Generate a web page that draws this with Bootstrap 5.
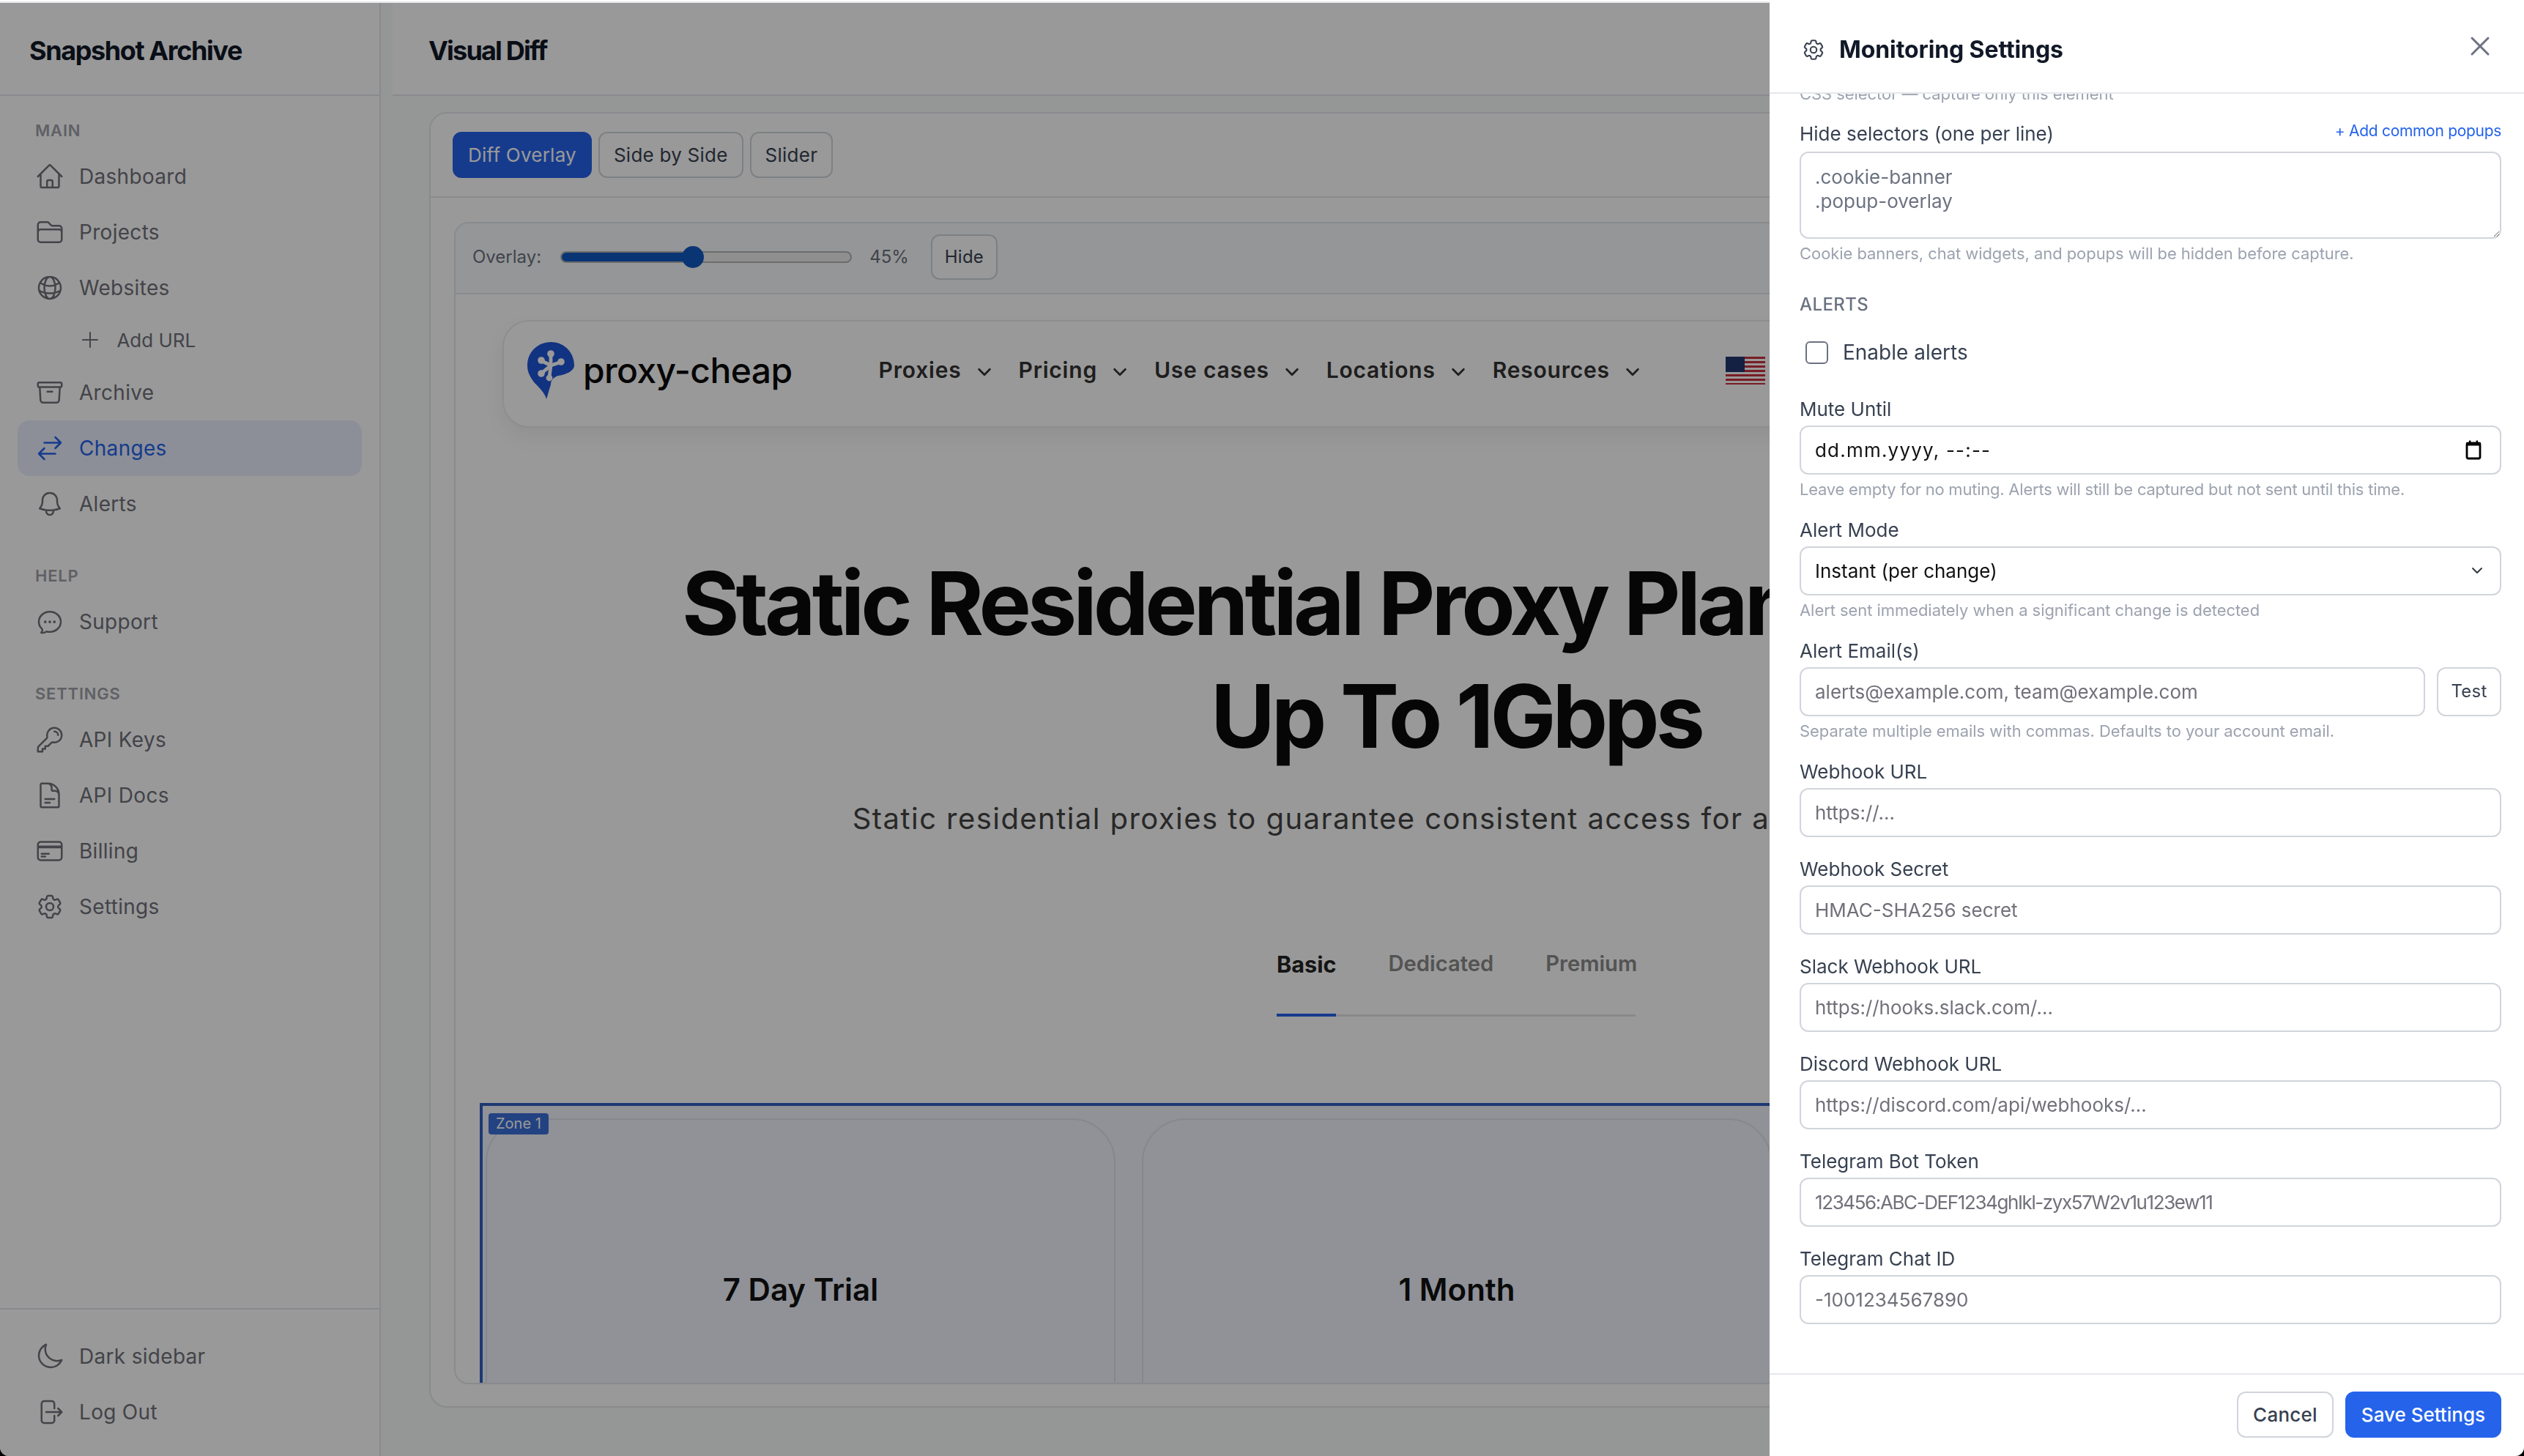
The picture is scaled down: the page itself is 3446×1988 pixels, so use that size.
<!DOCTYPE html>
<html lang="en">
<head>
  <meta charset="UTF-8">
  <title>Visual Diff - Snapshot Archive</title>
  <link rel="stylesheet" href="https://cdn.jsdelivr.net/npm/bootstrap@5.3.0/dist/css/bootstrap.min.css">
  <style>
    body { zoom: 2; margin: 0; height: 994px; overflow: hidden; background: #000; font-family: Inter, "Liberation Sans", sans-serif; }
    .top-edge { height: 2px; background: #fff; border-bottom: 1px solid #e5e7eb; }
    .app-frame { height: 992px; background: #f9fafb; border-radius: 0 0 6px 6px; overflow: hidden; }

    /* sidebar */
    .side-bar { width: 260px; background: #fff; border-right: 1px solid #e5e7eb; }
    .side-brand { height: 63.5px; padding: 2px 0 0 20px; border-bottom: 1px solid #e5e7eb; font-size: 18px; font-weight: 700; letter-spacing: -.7px; color: #111827; }
    .side-scroll { padding: 15.25px 12px 0; }
    .side-label { font-size: 11px; font-weight: 600; line-height: 16.5px; letter-spacing: .4px; color: #a1a1aa; padding-left: 12px; margin-bottom: 4px; }
    .side-group { margin-bottom: 22px; }
    .side-link { height: 38px; padding: 0 0 0 12px; gap: 10px; font-size: 14px; letter-spacing: .15px; color: #71717a; border-radius: 8px; }
    .side-link svg { width: 20px; height: 20px; flex: none; }
    .side-link.is-sub { height: 33.6px; padding-left: 41.7px; font-size: 13px; letter-spacing: 0; }
    .side-link.is-sub svg { width: 16px; height: 16px; }
    .side-link.active { background: rgba(37, 99, 235, .1); color: #2563eb; }
    .side-foot { padding: 13px 12px 11px; border-top: 1px solid #e5e7eb; }
    .ico { fill: none; stroke: currentColor; stroke-width: 1.5; stroke-linecap: round; stroke-linejoin: round; }

    /* main */
    .main-col { margin-left: 8px; min-width: 0; }
    .main-head { height: 63.5px; padding: 2px 0 0 24.5px; background: #fff; border-bottom: 1px solid #e5e7eb; font-size: 18px; font-weight: 700; letter-spacing: -.9px; color: #111827; }
    .main-body { padding: 11px 25px 0; }
    .diff-card { height: 884.5px; border-color: #e5e7eb; border-radius: 12px; overflow: hidden; }
    .diff-tabs { padding: 12.5px 15px; background: #fff; border-bottom: 1px solid #e5e7eb; gap: 4.5px; }
    .diff-body { padding: 16.5px 16px 16px; }
    .frame-box { height: 793.5px; border: 1px solid #e5e7eb; border-radius: 10px; overflow: hidden; background: #fff; }
    .frame-bar { height: 48.5px; padding: 0 0 2px 11.5px; background: #f8fafc; border-bottom: 1px solid #e5e7eb; font-size: 12px; color: #6b7280; }
    .btn-tab { height: 31.5px; padding: 0 9.5px; font-size: 13px; letter-spacing: .12px; color: #374151; border: 1px solid #d1d5db; border-radius: 6px; background: #fff; }
    .btn-tab.is-on { background: #2563eb; border-color: #2563eb; color: #fff; }
    .btn-hide { height: 31px; padding: 0 8.5px; font-size: 12px; margin-left: 15px; }
    .overlay-range { width: 199px; height: 16px; margin: 0 12px 0 13px; }
    .overlay-range::-webkit-slider-runnable-track { height: 8px; border-radius: 4px; background: linear-gradient(to right, #1259c3 var(--pct), #efefef var(--pct)); border: 1px solid #b5b5b5; }
    .overlay-range::-webkit-slider-thumb { width: 15px; height: 15px; margin-top: -4.5px; border-radius: 50%; background: #1259c3; border: 0; box-shadow: none; }

    /* captured page inside the diff */
    .shot-view { height: 744px; position: relative; overflow: hidden; background: #fff; }
    .shot-nav { width: 1302px; height: 73.5px; margin: 17.5px 0 0 32px; padding: 0 0 5px 16px; border: 1px solid #ececec; border-radius: 18px; box-shadow: 0 6px 14px rgba(0, 0, 0, .06); }
    .shot-brand { font-size: 24px; font-weight: 500; letter-spacing: -.3px; color: #0b0b0b; margin: 0 59px 0 6px; }
    .shot-menu { font-size: 15px; font-weight: 600; letter-spacing: .4px; color: #333; margin-right: 18px; }
    .shot-menu svg { width: 11px; height: 11px; margin-left: 10px; }
    .shot-flag { width: 27px; height: 19px; margin-left: 40px; }
    .shot-title { margin: 81.3px 0 0 32px; width: 1302px; font-size: 60px; line-height: 77px; font-weight: 700; letter-spacing: -2.5px; color: #0b0b0b; text-align: center; }
    .shot-sub { margin: 16.5px 0 0 32px; width: 1302px; font-size: 20px; line-height: 30px; letter-spacing: .72px; color: #444; text-align: center; white-space: nowrap; }
    .shot-switch { width: 245px; margin: 56.2px 0 0 560.5px; border-bottom: 1.5px solid #e5e5e5; height: 64px; gap: 35.5px; font-size: 14.6px; font-weight: 600; color: #8a8a8a; }
    .shot-switch span { padding-top: 17px; height: 64px; }
    .shot-switch .is-picked { color: #222; font-size: 15.3px; font-weight: 700; width: 43px; border-bottom: 2px solid #2563eb; }
    .shot-zone { position: absolute; left: 16.5px; top: 552px; width: 1332px; height: 200px; border: solid #2f5fc0; border-width: 2px 0 0 2px; background: rgba(37, 99, 235, .07); padding: 8.5px 0 0 2px; gap: 18px; }
    .shot-plan { width: 430px; height: 300px; flex: none; padding-top: 100px; border: 1px solid #e0e2e8; border-radius: 30px; text-align: center; font-size: 21px; font-weight: 600; color: #111; }
    .zone-tag { position: absolute; left: 4px; top: 5px; padding: 0 5px; height: 14.5px; line-height: 14.5px; border-radius: 2px; background: #3b6fd9; color: #fff; font-size: 10px; }

    /* dim behind the settings panel */
    .dim-layer { top: 2px; opacity: 1 !important; background: rgba(0, 0, 0, .4); }

    /* settings panel */
    .settings-panel { --bs-offcanvas-width: 515px; top: 2px; border: 0 !important; border-radius: 0 0 6px 0; color: #374151; }
    .settings-head { height: 64px; padding: 5px 23px 0 21.5px; border-bottom: 1px solid #e5e7eb; flex: none; }
    .settings-head svg.cog { width: 17px; height: 17px; margin-right: 9px; color: #374151; }
    .settings-title { font-size: 16px; font-weight: 700; letter-spacing: -.05px; color: #111827; margin: 0; }
    .close-x { color: #6b7280; margin-top: -5px; line-height: 0; }
    .close-x svg { width: 14px; height: 14px; }
    .settings-body { padding: 0 15.5px 0 20.5px; overflow: hidden; }
    .clip-hint { margin-top: -7px !important; }
    .first-field { margin-top: 11.3px; }
    .field { margin-bottom: 12px; }
    .field-label { display: block; font-size: 13px; line-height: 19.5px; margin-bottom: 1.5px; color: #374151; }
    .first-field .field-label { margin-bottom: 2.5px; }
    .field-link { font-size: 10.5px; letter-spacing: -.15px; color: #2563eb; text-decoration: none; }
    .field-input, .field-input.form-select { height: 33.5px; padding: 0 9.5px; font-size: 13px; color: #374151; border-color: #d1d5db; border-radius: 6px; }
    .field-input::placeholder { color: #71717a; }
    .field-area { height: 59.5px; padding: 8px 9.5px; font-size: 13px; line-height: 16.5px; color: #6b7280; border-color: #d1d5db; border-radius: 6px; }
    .field-date { color: #111; letter-spacing: .6px; background-repeat: no-repeat; background-position: right 12px center; background-size: 12px 14px;
      background-image: url("data:image/svg+xml,%3Csvg xmlns='http://www.w3.org/2000/svg' viewBox='0 0 12 14'%3E%3Crect x='1.5' y='2.5' width='9' height='10.5' rx='1' fill='none' stroke='%23000' stroke-width='1.4'/%3E%3Cpath d='M1 2h10v2.2H1zM3 .7h1.2V2H3zM7.8.7H9V2H7.8z'/%3E%3C/svg%3E"); }
    .field-select { color: #111 !important; background-size: 9px 8px; background-position: right 11px center; }
    .field-token::placeholder { letter-spacing: -.7px; }
    .field-help { margin: 3px 0 -1px; font-size: 11px; line-height: 14px; letter-spacing: -.03px; color: #9ca3af; }
    .help-tight { letter-spacing: -.115px; }
    .field-head { margin: 20.1px 0 14px; font-size: 12px; line-height: 18px; font-weight: 500; letter-spacing: .2px; color: #6b7280; }
    .check-row { height: 19.5px; margin-bottom: 19px; gap: 10px; padding-left: 4px; font-size: 14px; }
    .check-row .form-check-input { width: 15.5px; height: 15.5px; margin: 0; border-color: #6b7280; border-radius: 3px; }
    .btn-test { height: 33.5px; width: 44px; padding: 0; font-size: 12px; }
    .settings-foot { height: 56.5px; padding: 11.5px 15.5px 0 0; border-top: 1px solid #e5e7eb; gap: 8px; flex: none; }
    .btn-foot { height: 31.5px; padding: 0 10px; font-size: 13px; font-weight: 500; border-radius: 6px; }
    .btn-foot.is-save { background: #2563eb; color: #fff; border: 1px solid #2563eb; }
  </style>
</head>
<body>
  <svg class="d-none" xmlns="http://www.w3.org/2000/svg">
    <symbol id="i-home" viewBox="0 0 24 24"><path d="M2.25 12l8.954-8.955c.44-.439 1.152-.439 1.591 0L21.75 12M4.5 9.75v10.125c0 .621.504 1.125 1.125 1.125H9.75v-4.875c0-.621.504-1.125 1.125-1.125h2.25c.621 0 1.125.504 1.125 1.125V21h4.125c.621 0 1.125-.504 1.125-1.125V9.75M8.25 21h8.25"/></symbol>
    <symbol id="i-folder" viewBox="0 0 24 24"><path d="M2.25 12.75V12A2.25 2.25 0 0 1 4.5 9.75h15A2.25 2.25 0 0 1 21.75 12v.75m-8.69-6.44-2.12-2.12a1.5 1.5 0 0 0-1.061-.44H4.5A2.25 2.25 0 0 0 2.25 6v12a2.25 2.25 0 0 0 2.25 2.25h15A2.25 2.25 0 0 0 21.75 18V9a2.25 2.25 0 0 0-2.25-2.25h-5.379a1.5 1.5 0 0 1-1.06-.44Z"/></symbol>
    <symbol id="i-globe" viewBox="0 0 24 24"><path d="M12 21a9.004 9.004 0 0 0 8.716-6.747M12 21a9.004 9.004 0 0 1-8.716-6.747M12 21c2.485 0 4.5-4.03 4.5-9S14.485 3 12 3m0 18c-2.485 0-4.5-4.03-4.5-9S9.515 3 12 3m0 0a8.997 8.997 0 0 1 7.843 4.582M12 3a8.997 8.997 0 0 0-7.843 4.582m15.686 0A11.953 11.953 0 0 1 12 10.5c-2.998 0-5.74-1.1-7.843-2.918m15.686 0A8.959 8.959 0 0 1 21 12c0 .778-.099 1.533-.284 2.253m0 0A17.919 17.919 0 0 1 12 16.5c-3.162 0-6.133-.815-8.716-2.247m0 0A9.015 9.015 0 0 1 3 12c0-1.605.42-3.113 1.157-4.418"/></symbol>
    <symbol id="i-plus" viewBox="0 0 24 24"><path d="M12 4.5v15m7.5-7.5h-15"/></symbol>
    <symbol id="i-archive" viewBox="0 0 24 24"><path d="M20.25 7.5l-.625 10.632a2.25 2.25 0 0 1-2.247 2.118H6.622a2.25 2.25 0 0 1-2.247-2.118L3.75 7.5M10 11.25h4M3.375 7.5h17.25c.621 0 1.125-.504 1.125-1.125v-1.5c0-.621-.504-1.125-1.125-1.125H3.375c-.621 0-1.125.504-1.125 1.125v1.5c0 .621.504 1.125 1.125 1.125Z"/></symbol>
    <symbol id="i-swap" viewBox="0 0 24 24"><path d="M7.5 21L3 16.5m0 0L7.5 12M3 16.5h13.5m0-13.5L21 7.5m0 0L16.5 12M21 7.5H7.5"/></symbol>
    <symbol id="i-bell" viewBox="0 0 24 24"><path d="M14.857 17.082a23.848 23.848 0 0 0 5.454-1.31A8.967 8.967 0 0 1 18 9.75V9A6 6 0 0 0 6 9v.75a8.967 8.967 0 0 1-2.312 6.022c1.733.64 3.56 1.085 5.455 1.31m5.714 0a24.255 24.255 0 0 1-5.714 0m5.714 0a3 3 0 1 1-5.714 0"/></symbol>
    <symbol id="i-chat" viewBox="0 0 24 24"><path d="M8.625 12a.375.375 0 1 1-.75 0 .375.375 0 0 1 .75 0Zm0 0H8.25m4.125 0a.375.375 0 1 1-.75 0 .375.375 0 0 1 .75 0Zm0 0H12m4.125 0a.375.375 0 1 1-.75 0 .375.375 0 0 1 .75 0Zm0 0h-.375M21 12c0 4.556-4.03 8.25-9 8.25a9.764 9.764 0 0 1-2.555-.337A5.972 5.972 0 0 1 5.41 20.97a5.969 5.969 0 0 1-.474-.065 4.48 4.48 0 0 0 .978-2.025c.09-.457-.133-.901-.467-1.226C3.93 16.178 3 14.189 3 12c0-4.556 4.03-8.25 9-8.25s9 3.694 9 8.25Z"/></symbol>
    <symbol id="i-key" viewBox="0 0 24 24"><path d="M15.75 5.25a3 3 0 0 1 3 3m3 0a6 6 0 0 1-7.029 5.912c-.563-.097-1.159.026-1.563.43L10.5 17.25H8.25v2.25H6v2.25H2.25v-2.818c0-.597.237-1.17.659-1.591l6.499-6.499c.404-.404.527-1 .43-1.563A6 6 0 1 1 21.75 8.25Z"/></symbol>
    <symbol id="i-doc" viewBox="0 0 24 24"><path d="M19.5 14.25v-2.625a3.375 3.375 0 0 0-3.375-3.375h-1.5A1.125 1.125 0 0 1 13.5 7.125v-1.5a3.375 3.375 0 0 0-3.375-3.375H8.25m0 12.75h7.5m-7.5 3H12M10.5 2.25H5.625c-.621 0-1.125.504-1.125 1.125v17.25c0 .621.504 1.125 1.125 1.125h12.75c.621 0 1.125-.504 1.125-1.125V11.25a9 9 0 0 0-9-9Z"/></symbol>
    <symbol id="i-card" viewBox="0 0 24 24"><path d="M2.25 8.25h19.5M2.25 9h19.5m-16.5 5.25h6m-6 2.25h3m-3.75 3h15a2.25 2.25 0 0 0 2.25-2.25V6.75A2.25 2.25 0 0 0 19.5 4.5h-15a2.25 2.25 0 0 0-2.25 2.25v10.5A2.25 2.25 0 0 0 4.5 19.5Z"/></symbol>
    <symbol id="i-cog" viewBox="0 0 24 24"><path d="M9.594 3.94c.09-.542.56-.94 1.11-.94h2.593c.55 0 1.02.398 1.11.94l.213 1.281c.063.374.313.686.645.87.074.04.147.083.22.127.325.196.72.257 1.075.124l1.217-.456a1.125 1.125 0 0 1 1.37.49l1.296 2.247a1.125 1.125 0 0 1-.26 1.431l-1.003.827c-.293.241-.438.613-.43.992a7.723 7.723 0 0 1 0 .255c-.008.378.137.75.43.991l1.004.827c.424.35.534.955.26 1.43l-1.298 2.247a1.125 1.125 0 0 1-1.369.491l-1.217-.456c-.355-.133-.75-.072-1.076.124a6.47 6.47 0 0 1-.22.128c-.331.183-.581.495-.644.869l-.213 1.281c-.09.543-.56.94-1.11.94h-2.594c-.55 0-1.019-.398-1.11-.94l-.213-1.281c-.062-.374-.312-.686-.644-.87a6.52 6.52 0 0 1-.22-.127c-.325-.196-.72-.257-1.076-.124l-1.217.456a1.125 1.125 0 0 1-1.369-.49l-1.297-2.247a1.125 1.125 0 0 1 .26-1.431l1.004-.827c.292-.24.437-.613.43-.991a6.932 6.932 0 0 1 0-.255c.007-.38-.138-.751-.43-.992l-1.004-.827a1.125 1.125 0 0 1-.26-1.43l1.297-2.247a1.125 1.125 0 0 1 1.37-.491l1.216.456c.356.133.751.072 1.076-.124.072-.044.146-.086.22-.128.332-.183.582-.495.644-.869l.214-1.28Z"/><path d="M15 12a3 3 0 1 1-6 0 3 3 0 0 1 6 0Z"/></symbol>
    <symbol id="i-moon" viewBox="0 0 24 24"><path d="M21.752 15.002A9.72 9.72 0 0 1 18 15.75c-5.385 0-9.75-4.365-9.75-9.75 0-1.33.266-2.597.748-3.752A9.753 9.753 0 0 0 3 11.25C3 16.635 7.365 21 12.75 21a9.753 9.753 0 0 0 9.002-5.998Z"/></symbol>
    <symbol id="i-logout" viewBox="0 0 24 24"><path d="M15.75 9V5.25A2.25 2.25 0 0 0 13.5 3h-6a2.25 2.25 0 0 0-2.25 2.25v13.5A2.25 2.25 0 0 0 7.5 21h6a2.25 2.25 0 0 0 2.25-2.25V15m3 0 3-3m0 0-3-3m3 3H9"/></symbol>
    <symbol id="i-down" viewBox="0 0 12 12"><path d="M2 4l4 4 4-4"/></symbol>
    <symbol id="i-x" viewBox="0 0 14 14"><path d="M1.5 1.5l11 11m0-11l-11 11"/></symbol>
  </svg>

  <div class="top-edge"></div>
  <div class="app-frame d-flex">
    <aside class="side-bar d-flex flex-column flex-shrink-0">
      <div class="side-brand d-flex align-items-center">Snapshot Archive</div>
      <div class="side-scroll flex-grow-1">
        <div class="side-group">
          <div class="side-label">MAIN</div>
          <nav class="nav flex-column">
            <a class="nav-link side-link d-flex align-items-center" href="#"><svg class="ico"><use href="#i-home"/></svg>Dashboard</a>
            <a class="nav-link side-link d-flex align-items-center" href="#"><svg class="ico"><use href="#i-folder"/></svg>Projects</a>
            <a class="nav-link side-link d-flex align-items-center" href="#"><svg class="ico"><use href="#i-globe"/></svg>Websites</a>
            <a class="nav-link side-link is-sub d-flex align-items-center" href="#"><svg class="ico"><use href="#i-plus"/></svg>Add URL</a>
            <a class="nav-link side-link d-flex align-items-center" href="#"><svg class="ico"><use href="#i-archive"/></svg>Archive</a>
            <a class="nav-link side-link active d-flex align-items-center" href="#"><svg class="ico"><use href="#i-swap"/></svg>Changes</a>
            <a class="nav-link side-link d-flex align-items-center" href="#"><svg class="ico"><use href="#i-bell"/></svg>Alerts</a>
          </nav>
        </div>
        <div class="side-group">
          <div class="side-label">HELP</div>
          <nav class="nav flex-column">
            <a class="nav-link side-link d-flex align-items-center" href="#"><svg class="ico"><use href="#i-chat"/></svg>Support</a>
          </nav>
        </div>
        <div class="side-group">
          <div class="side-label">SETTINGS</div>
          <nav class="nav flex-column">
            <a class="nav-link side-link d-flex align-items-center" href="#"><svg class="ico"><use href="#i-key"/></svg>API Keys</a>
            <a class="nav-link side-link d-flex align-items-center" href="#"><svg class="ico"><use href="#i-doc"/></svg>API Docs</a>
            <a class="nav-link side-link d-flex align-items-center" href="#"><svg class="ico"><use href="#i-card"/></svg>Billing</a>
            <a class="nav-link side-link d-flex align-items-center" href="#"><svg class="ico"><use href="#i-cog"/></svg>Settings</a>
          </nav>
        </div>
      </div>
      <div class="side-foot">
        <a class="nav-link side-link d-flex align-items-center" href="#"><svg class="ico"><use href="#i-moon"/></svg>Dark sidebar</a>
        <a class="nav-link side-link d-flex align-items-center" href="#"><svg class="ico"><use href="#i-logout"/></svg>Log Out</a>
      </div>
    </aside>

    <div class="main-col flex-grow-1">
      <header class="main-head d-flex align-items-center">Visual Diff</header>
      <div class="main-body">
        <div class="card diff-card">
          <div class="diff-tabs d-flex">
            <button class="btn btn-tab is-on">Diff Overlay</button>
            <button class="btn btn-tab">Side by Side</button>
            <button class="btn btn-tab">Slider</button>
          </div>
          <div class="diff-body">
            <div class="frame-box">
              <div class="frame-bar d-flex align-items-center">
                <span>Overlay:</span>
                <input type="range" class="form-range overlay-range" min="0" max="100" value="45" style="--pct: 45%">
                <span>45%</span>
                <button class="btn btn-tab btn-hide">Hide</button>
              </div>
              <div class="shot-view">
                <div class="shot-nav d-flex align-items-center">
                  <svg width="32" height="39" viewBox="0 0 32 39" xmlns="http://www.w3.org/2000/svg">
                    <path d="M16 0C7 0 0 7 0 16c0 5 2 8 5 12 3 3 7 7 8 11 1-3 2-7 3-10 0-3 2-5 5-6 7-1 11-4 11-7C32 7 25 0 16 0Z" fill="#1f56d8"/>
                    <g fill="none" stroke="#fff" stroke-width="2.4" stroke-linecap="round"><path d="M16 9v5M10 13l6 3 6-2M10 21l6-5M15 24l1-8"/></g>
                    <g fill="#fff"><circle cx="16" cy="8" r="2.4"/><circle cx="9.5" cy="12.5" r="2.4"/><circle cx="23" cy="13.5" r="2.4"/><circle cx="9.5" cy="21.5" r="2.4"/><circle cx="15" cy="24.5" r="2.2"/></g>
                  </svg>
                  <span class="shot-brand">proxy-cheap</span>
                  <span class="shot-menu">Proxies<svg class="ico"><use href="#i-down"/></svg></span>
                  <span class="shot-menu">Pricing<svg class="ico"><use href="#i-down"/></svg></span>
                  <span class="shot-menu">Use cases<svg class="ico"><use href="#i-down"/></svg></span>
                  <span class="shot-menu">Locations<svg class="ico"><use href="#i-down"/></svg></span>
                  <span class="shot-menu">Resources<svg class="ico"><use href="#i-down"/></svg></span>
                  <svg class="shot-flag" viewBox="0 0 27 19" xmlns="http://www.w3.org/2000/svg">
                    <rect width="27" height="19" fill="#fff"/>
                    <path d="M0 0h27v1.5H0zM0 3h27v1.5H0zM0 6h27v1.5H0zM0 9h27v1.5H0zM0 12h27v1.5H0zM0 15h27v1.5H0zM0 18h27v1H0z" fill="#c8313e"/>
                    <rect width="13" height="10.5" fill="#24386f"/>
                  </svg>
                </div>
                <h1 class="shot-title">Static Residential Proxy Plans Reaching<br>Up To 1Gbps</h1>
                <p class="shot-sub mb-0">Static residential proxies to guarantee consistent access for all your online needs</p>
                <div class="shot-switch d-flex">
                  <span class="is-picked">Basic</span>
                  <span>Dedicated</span>
                  <span>Premium</span>
                </div>
                <div class="shot-zone d-flex">
                  <div class="shot-plan">7 Day Trial</div>
                  <div class="shot-plan">1 Month</div>
                  <span class="zone-tag">Zone 1</span>
                </div>
              </div>
            </div>
          </div>
        </div>
      </div>
    </div>
  </div>

  <div class="offcanvas-backdrop dim-layer"></div>
  <div class="offcanvas offcanvas-end show settings-panel" tabindex="-1" data-bs-backdrop="false" data-bs-scroll="true">
    <div class="settings-head d-flex align-items-center">
      <svg class="ico cog"><use href="#i-cog"/></svg>
      <h5 class="settings-title flex-grow-1">Monitoring Settings</h5>
      <button type="button" class="btn p-0 border-0 close-x" aria-label="Close"><svg class="ico"><use href="#i-x"/></svg></button>
    </div>
    <div class="offcanvas-body settings-body">
      <p class="field-help clip-hint">CSS selector — capture only this element</p>
      <div class="field first-field">
        <div class="d-flex justify-content-between">
          <label class="field-label">Hide selectors (one per line)</label>
          <a class="field-link" href="#">+ Add common popups</a>
        </div>
        <textarea class="form-control field-area">.cookie-banner
.popup-overlay</textarea>
        <p class="field-help">Cookie banners, chat widgets, and popups will be hidden before capture.</p>
      </div>
      <div class="field-head">ALERTS</div>
      <div class="check-row d-flex align-items-center">
        <input class="form-check-input" type="checkbox" id="enableAlerts">
        <label for="enableAlerts">Enable alerts</label>
      </div>
      <div class="field">
        <label class="field-label">Mute Until</label>
        <input type="text" class="form-control field-input field-date" value="dd.mm.yyyy, --:--">
        <p class="field-help help-tight">Leave empty for no muting. Alerts will still be captured but not sent until this time.</p>
      </div>
      <div class="field">
        <label class="field-label">Alert Mode</label>
        <select class="form-select field-input field-select"><option>Instant (per change)</option><option>Daily digest</option></select>
        <p class="field-help">Alert sent immediately when a significant change is detected</p>
      </div>
      <div class="field">
        <label class="field-label">Alert Email(s)</label>
        <div class="d-flex gap-2">
          <input type="text" class="form-control field-input" placeholder="alerts@example.com, team@example.com">
          <button class="btn btn-tab btn-test flex-shrink-0">Test</button>
        </div>
        <p class="field-help">Separate multiple emails with commas. Defaults to your account email.</p>
      </div>
      <div class="field">
        <label class="field-label">Webhook URL</label>
        <input type="text" class="form-control field-input" placeholder="https://...">
      </div>
      <div class="field">
        <label class="field-label">Webhook Secret</label>
        <input type="text" class="form-control field-input" placeholder="HMAC-SHA256 secret">
      </div>
      <div class="field">
        <label class="field-label">Slack Webhook URL</label>
        <input type="text" class="form-control field-input" placeholder="https://hooks.slack.com/...">
      </div>
      <div class="field">
        <label class="field-label">Discord Webhook URL</label>
        <input type="text" class="form-control field-input" placeholder="https://discord.com/api/webhooks/...">
      </div>
      <div class="field">
        <label class="field-label">Telegram Bot Token</label>
        <input type="text" class="form-control field-input field-token" placeholder="123456:ABC-DEF1234ghIkl-zyx57W2v1u123ew11">
      </div>
      <div class="field">
        <label class="field-label">Telegram Chat ID</label>
        <input type="text" class="form-control field-input" placeholder="-1001234567890">
      </div>
    </div>
    <div class="settings-foot d-flex justify-content-end">
      <button class="btn btn-tab btn-foot">Cancel</button>
      <button class="btn btn-foot is-save">Save Settings</button>
    </div>
  </div>

  <script src="https://cdn.jsdelivr.net/npm/bootstrap@5.3.0/dist/js/bootstrap.bundle.min.js"></script>
</body>
</html>
